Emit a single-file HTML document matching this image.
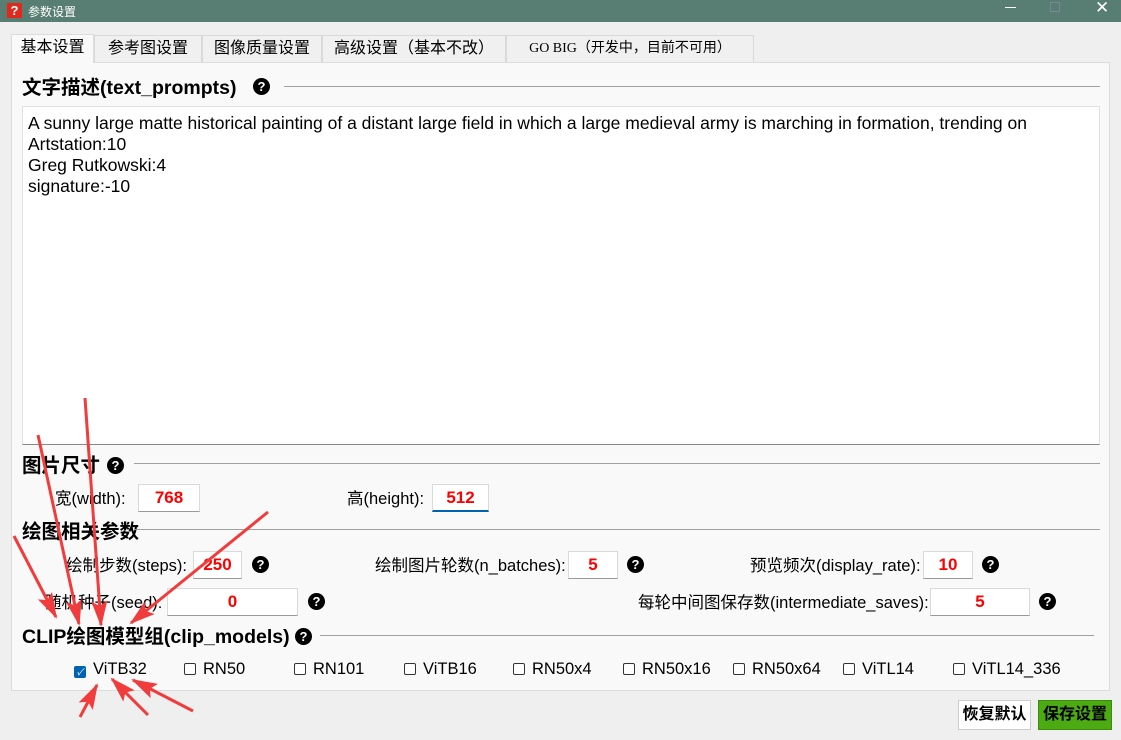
<!DOCTYPE html>
<html><head><meta charset="utf-8"><style>
*{margin:0;padding:0;box-sizing:border-box}
body{width:1121px;height:740px;background:#efefef;font-family:"Liberation Sans","Noto Sans CJK SC",sans-serif;position:relative;overflow:hidden;color:#000}
.a{position:absolute}
.title{left:0;top:0;width:1121px;height:22px;background:#587d72;color:#fff;font-size:12px}
.tab{top:35px;height:27px;border:1px solid #d9d9d9;border-bottom:none;background:#f0f0f0;font-size:16px;line-height:25px;text-align:center}
.panel{left:11px;top:62px;width:1099px;height:629px;background:#f9f9f9;border:1px solid #dcdcdc}
h2{position:absolute;font-size:19.5px;font-weight:bold;line-height:24px;white-space:nowrap}
.hr{position:absolute;height:1px;background:#a0a0a0}
.q{position:absolute;width:17px;height:17px;border-radius:50%;background:#000;color:#fff;font-size:13px;font-weight:bold;text-align:center;line-height:17px}
.lbl{position:absolute;font-size:16.5px;white-space:nowrap;line-height:20px}
.in{position:absolute;height:28px;background:#fff;border:1px solid #dadada;border-bottom-color:#999;color:#f00;font-weight:bold;font-size:17px;text-align:center;line-height:26px}
.cb{position:absolute;font-size:16.5px;white-space:nowrap;line-height:20px}
.cb i{display:inline-block;width:12px;height:12px;border:1px solid #333;border-radius:2px;vertical-align:-1px;margin-right:7px;background:#fff}
</style></head><body>
<div class="a title"><div class="a" style="left:7px;top:3px;width:15px;height:15px;background:#e0281c;color:#fff;font-weight:bold;font-size:13px;text-align:center;line-height:15px">?</div><span class="a" style="left:28px;top:3px">参数设置</span>
<div class="a" style="left:1005px;top:7px;width:11px;height:1px;background:#fff"></div>
<div class="a" style="left:1050px;top:2px;width:10px;height:10px;border:1px solid #789"></div>
<span class="a" style="left:1095px;top:-2px;font-size:17px">✕</span></div>
<div class="a tab" style="left:11px;top:34px;height:29px;width:83px;background:#f9f9f9;border-color:#dcdcdc;z-index:2">基本设置</div>
<div class="a tab" style="left:94px;width:108px">参考图设置</div>
<div class="a tab" style="left:202px;width:120px">图像质量设置</div>
<div class="a tab" style="left:322px;width:184px">高级设置（基本不改）</div>
<div class="a tab" style="left:506px;width:248px;font-family:'Liberation Serif','Noto Sans CJK SC',serif;font-size:14px">GO BIG（开发中，目前不可用）</div>
<div class="a panel"></div>
<h2 style="left:22px;top:76px">文字描述(text_prompts)</h2><div class="q" style="left:253px;top:78px">?</div><div class="hr" style="left:284px;top:86px;width:816px"></div>
<div class="a" style="left:22px;top:106px;width:1078px;height:339px;background:#fff;border:1px solid #e0e0e0;border-bottom:1px solid #888;font-size:17.5px;line-height:21px;padding:6px 5px;white-space:nowrap">A sunny large matte historical painting of a distant large field in which a large medieval army is marching in formation, trending on<br>Artstation:10<br>Greg Rutkowski:4<br>signature:-10</div>
<h2 style="left:22px;top:454px">图片尺寸</h2><div class="q" style="left:107px;top:457px">?</div><div class="hr" style="left:134px;top:463px;width:966px"></div>
<div class="lbl" style="left:55px;top:489px">宽(width):</div><div class="in" style="left:138px;top:484px;width:62px">768</div>
<div class="lbl" style="left:347px;top:489px">高(height):</div><div class="in" style="left:432px;top:484px;width:57px;border-bottom:2px solid #0063b1">512</div>
<h2 style="left:22px;top:520px">绘图相关参数</h2><div class="hr" style="left:134px;top:529px;width:966px"></div>
<div class="lbl" style="left:66px;top:556px">绘制步数(steps):</div><div class="in" style="left:193px;top:551px;width:49px">250</div><div class="q" style="left:252px;top:556px">?</div>
<div class="lbl" style="left:375px;top:556px">绘制图片轮数(n_batches):</div><div class="in" style="left:568px;top:551px;width:50px">5</div><div class="q" style="left:627px;top:556px">?</div>
<div class="lbl" style="left:750px;top:556px">预览频次(display_rate):</div><div class="in" style="left:923px;top:551px;width:50px">10</div><div class="q" style="left:982px;top:556px">?</div>
<div class="lbl" style="left:45px;top:593px">随机种子(seed):</div><div class="in" style="left:167px;top:588px;width:131px">0</div><div class="q" style="left:308px;top:593px">?</div>
<div class="lbl" style="left:638px;top:593px">每轮中间图保存数(intermediate_saves):</div><div class="in" style="left:930px;top:588px;width:100px">5</div><div class="q" style="left:1039px;top:593px">?</div>
<h2 style="left:22px;top:625px">CLIP绘图模型组(clip_models)</h2><div class="q" style="left:295px;top:628px">?</div><div class="hr" style="left:320px;top:635px;width:774px"></div>
<div class="cb" style="left:74px;top:659px"><i style="background:#0063b1;border-color:#0063b1;color:#fff;font-size:9px;line-height:10px;text-align:center">✓</i>ViTB32</div>
<div class="cb" style="left:184px;top:659px"><i></i>RN50</div>
<div class="cb" style="left:294px;top:659px"><i></i>RN101</div>
<div class="cb" style="left:404px;top:659px"><i></i>ViTB16</div>
<div class="cb" style="left:513px;top:659px"><i></i>RN50x4</div>
<div class="cb" style="left:623px;top:659px"><i></i>RN50x16</div>
<div class="cb" style="left:733px;top:659px"><i></i>RN50x64</div>
<div class="cb" style="left:843px;top:659px"><i></i>ViTL14</div>
<div class="cb" style="left:953px;top:659px"><i></i>ViTL14_336</div>
<div class="a" style="left:958px;top:700px;width:73px;height:30px;background:#fff;border:1px solid #ccc;font-size:16px;font-weight:bold;text-align:center;line-height:28px">恢复默认</div>
<div class="a" style="left:1038px;top:700px;width:74px;height:30px;background:#4caa12;border:1px solid #3a8a0c;font-size:16px;font-weight:bold;text-align:center;line-height:28px">保存设置</div>
<svg class="a" style="left:0;top:0" width="1121" height="740"><defs><marker id="m" markerUnits="userSpaceOnUse" markerWidth="26" markerHeight="16" refX="24" refY="8" orient="auto"><path d="M0,0 L26,8 L0,16 L5,8Z" fill="#f03c3c"/></marker></defs>
<g stroke="#f03c3c" stroke-width="3" marker-end="url(#m)" fill="none">
<line x1="14" y1="536" x2="56" y2="617"/><line x1="38" y1="435" x2="79" y2="624"/><line x1="85" y1="398" x2="101" y2="625"/><line x1="268" y1="512" x2="131" y2="623"/>
<line x1="80" y1="717" x2="97" y2="685"/><line x1="148" y1="715" x2="112" y2="679"/><line x1="193" y1="711" x2="133" y2="680"/></g></svg>
</body></html>
